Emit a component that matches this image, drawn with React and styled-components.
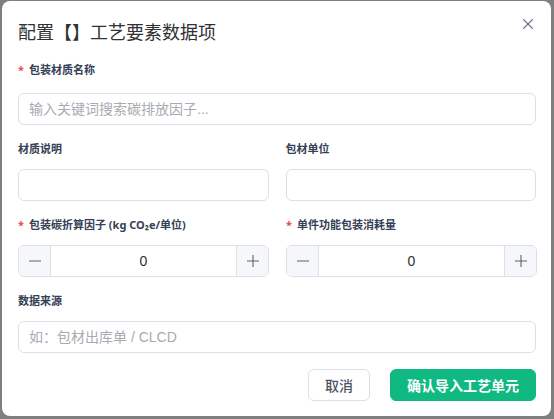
import { X } from "lucide-react";
import styled, { createGlobalStyle } from "styled-components";

const GlobalStyle = createGlobalStyle`
  html, body {
    margin: 0;
    height: 419px;
    overflow: hidden;
    background: #7f7f7f;
  }
  * {
    box-sizing: border-box;
  }
`;

const Backdrop = styled.div`
  padding: 1px 0 0 2px;
  font-family: "Noto Sans", "Noto Sans CJK SC", sans-serif;
`;

const Dialog = styled.div`
  width: 549px;
  height: 415px;
  background: #ffffff;
  border-radius: 8px;
  padding: 18px 15px 15px 16px;
`;

const Header = styled.div`
  display: flex;
  justify-content: space-between;
  align-items: flex-start;
`;

const Title = styled.h2`
  margin: 0;
  font-size: 18px;
  line-height: 24px;
  font-weight: 400;
  color: #303133;
  font-family: "Noto Sans CJK SC", sans-serif;
`;

const CloseButton = styled.button`
  width: 18px;
  height: 18px;
  margin: -4px -1px 0 0;
  padding: 0;
  border: none;
  background: transparent;
  color: #64748b;
  display: flex;
  align-items: center;
  justify-content: center;
`;

const Form = styled.div`
  margin-top: 19px;
`;

const Row = styled.div`
  display: grid;
  grid-template-columns: 1fr 1fr;
  column-gap: 17px;
`;

const Field = styled.div`
  margin-bottom: 16px;
`;

const Label = styled.div`
  height: 16px;
  line-height: 16px;
  font-size: 11px;
  font-weight: 700;
  color: #344054;
  margin-bottom: ${(p) => (p.$gap ? p.$gap : 12)}px;
  display: flex;
  align-items: center;
`;

const Required = styled.span`
  color: #ef4444;
  margin-right: 5px;
  font-size: 11px;
`;

const TextInput = styled.input`
  display: block;
  width: 100%;
  height: 32px;
  border: 1px solid #dcdfe6;
  border-radius: 6px;
  padding: 0 10px;
  font-size: 14px;
  font-family: "Liberation Sans", "Noto Sans CJK SC", sans-serif;
  color: #303133;
  outline: none;
  &::placeholder {
    color: #a8abb2;
  }
`;

const Stepper = styled.div`
  display: flex;
  height: 32px;
  border: 1px solid #dcdfe6;
  border-radius: 6px;
  overflow: hidden;
`;

const StepButton = styled.button`
  width: 32px;
  flex: none;
  border: none;
  padding: 0;
  background: #f5f7fa;
  color: #606266;
  display: flex;
  align-items: center;
  justify-content: center;
  border-${(p) => (p.$side === "left" ? "right" : "left")}: 1px solid #dcdfe6;
`;

const StepValue = styled.input`
  flex: 1;
  min-width: 0;
  border: none;
  outline: none;
  text-align: center;
  font-size: 14px;
  font-family: "Liberation Sans", sans-serif;
  color: #303133;
  background: #fff;
`;

const Footer = styled.div`
  display: flex;
  justify-content: flex-end;
  gap: 20px;
`;

const Button = styled.button`
  height: 32px;
  padding: 0 16px;
  border-radius: 6px;
  font-size: 14px;
  font-family: "Noto Sans CJK SC", sans-serif;
  font-weight: ${(p) => (p.$primary ? 700 : 500)};
  border: 1px solid ${(p) => (p.$primary ? "#10b981" : "#dcdfe6")};
  background: ${(p) => (p.$primary ? "#10b981" : "#ffffff")};
  color: ${(p) => (p.$primary ? "#ffffff" : "#4b5563")};
`;

function NumberField({ label }) {
  return (
    <Field>
      <Label>
        <Required>*</Required>
        {label}
      </Label>
      <Stepper>
        <StepButton $side="left">
          <svg width="12" height="12" viewBox="0 0 12 12">
            <path d="M0 6h12" stroke="currentColor" strokeWidth="1.1" />
          </svg>
        </StepButton>
        <StepValue defaultValue="0" />
        <StepButton $side="right">
          <svg width="12" height="12" viewBox="0 0 12 12">
            <path d="M0 6h12M6 0v12" stroke="currentColor" strokeWidth="1.1" />
          </svg>
        </StepButton>
      </Stepper>
    </Field>
  );
}

export default function App() {
  return (
    <Backdrop>
      <GlobalStyle />
      <Dialog>
        <Header>
          <Title>配置【】工艺要素数据项</Title>
          <CloseButton type="button">
            <X size={18} strokeWidth={1.5} />
          </CloseButton>
        </Header>
        <Form>
          <Field>
            <Label $gap={15}>
              <Required>*</Required>
              包装材质名称
            </Label>
            <TextInput placeholder="输入关键词搜索碳排放因子..." />
          </Field>
          <Row>
            <Field>
              <Label>材质说明</Label>
              <TextInput />
            </Field>
            <Field>
              <Label>包材单位</Label>
              <TextInput />
            </Field>
          </Row>
          <Row>
            <NumberField label="包装碳折算因子 (kg CO₂e/单位)" />
            <NumberField label="单件功能包装消耗量" />
          </Row>
          <Field>
            <Label>数据来源</Label>
            <TextInput placeholder="如：包材出库单 / CLCD" />
          </Field>
        </Form>
        <Footer>
          <Button type="button">取消</Button>
          <Button type="button" $primary>
            确认导入工艺单元
          </Button>
        </Footer>
      </Dialog>
    </Backdrop>
  );
}
